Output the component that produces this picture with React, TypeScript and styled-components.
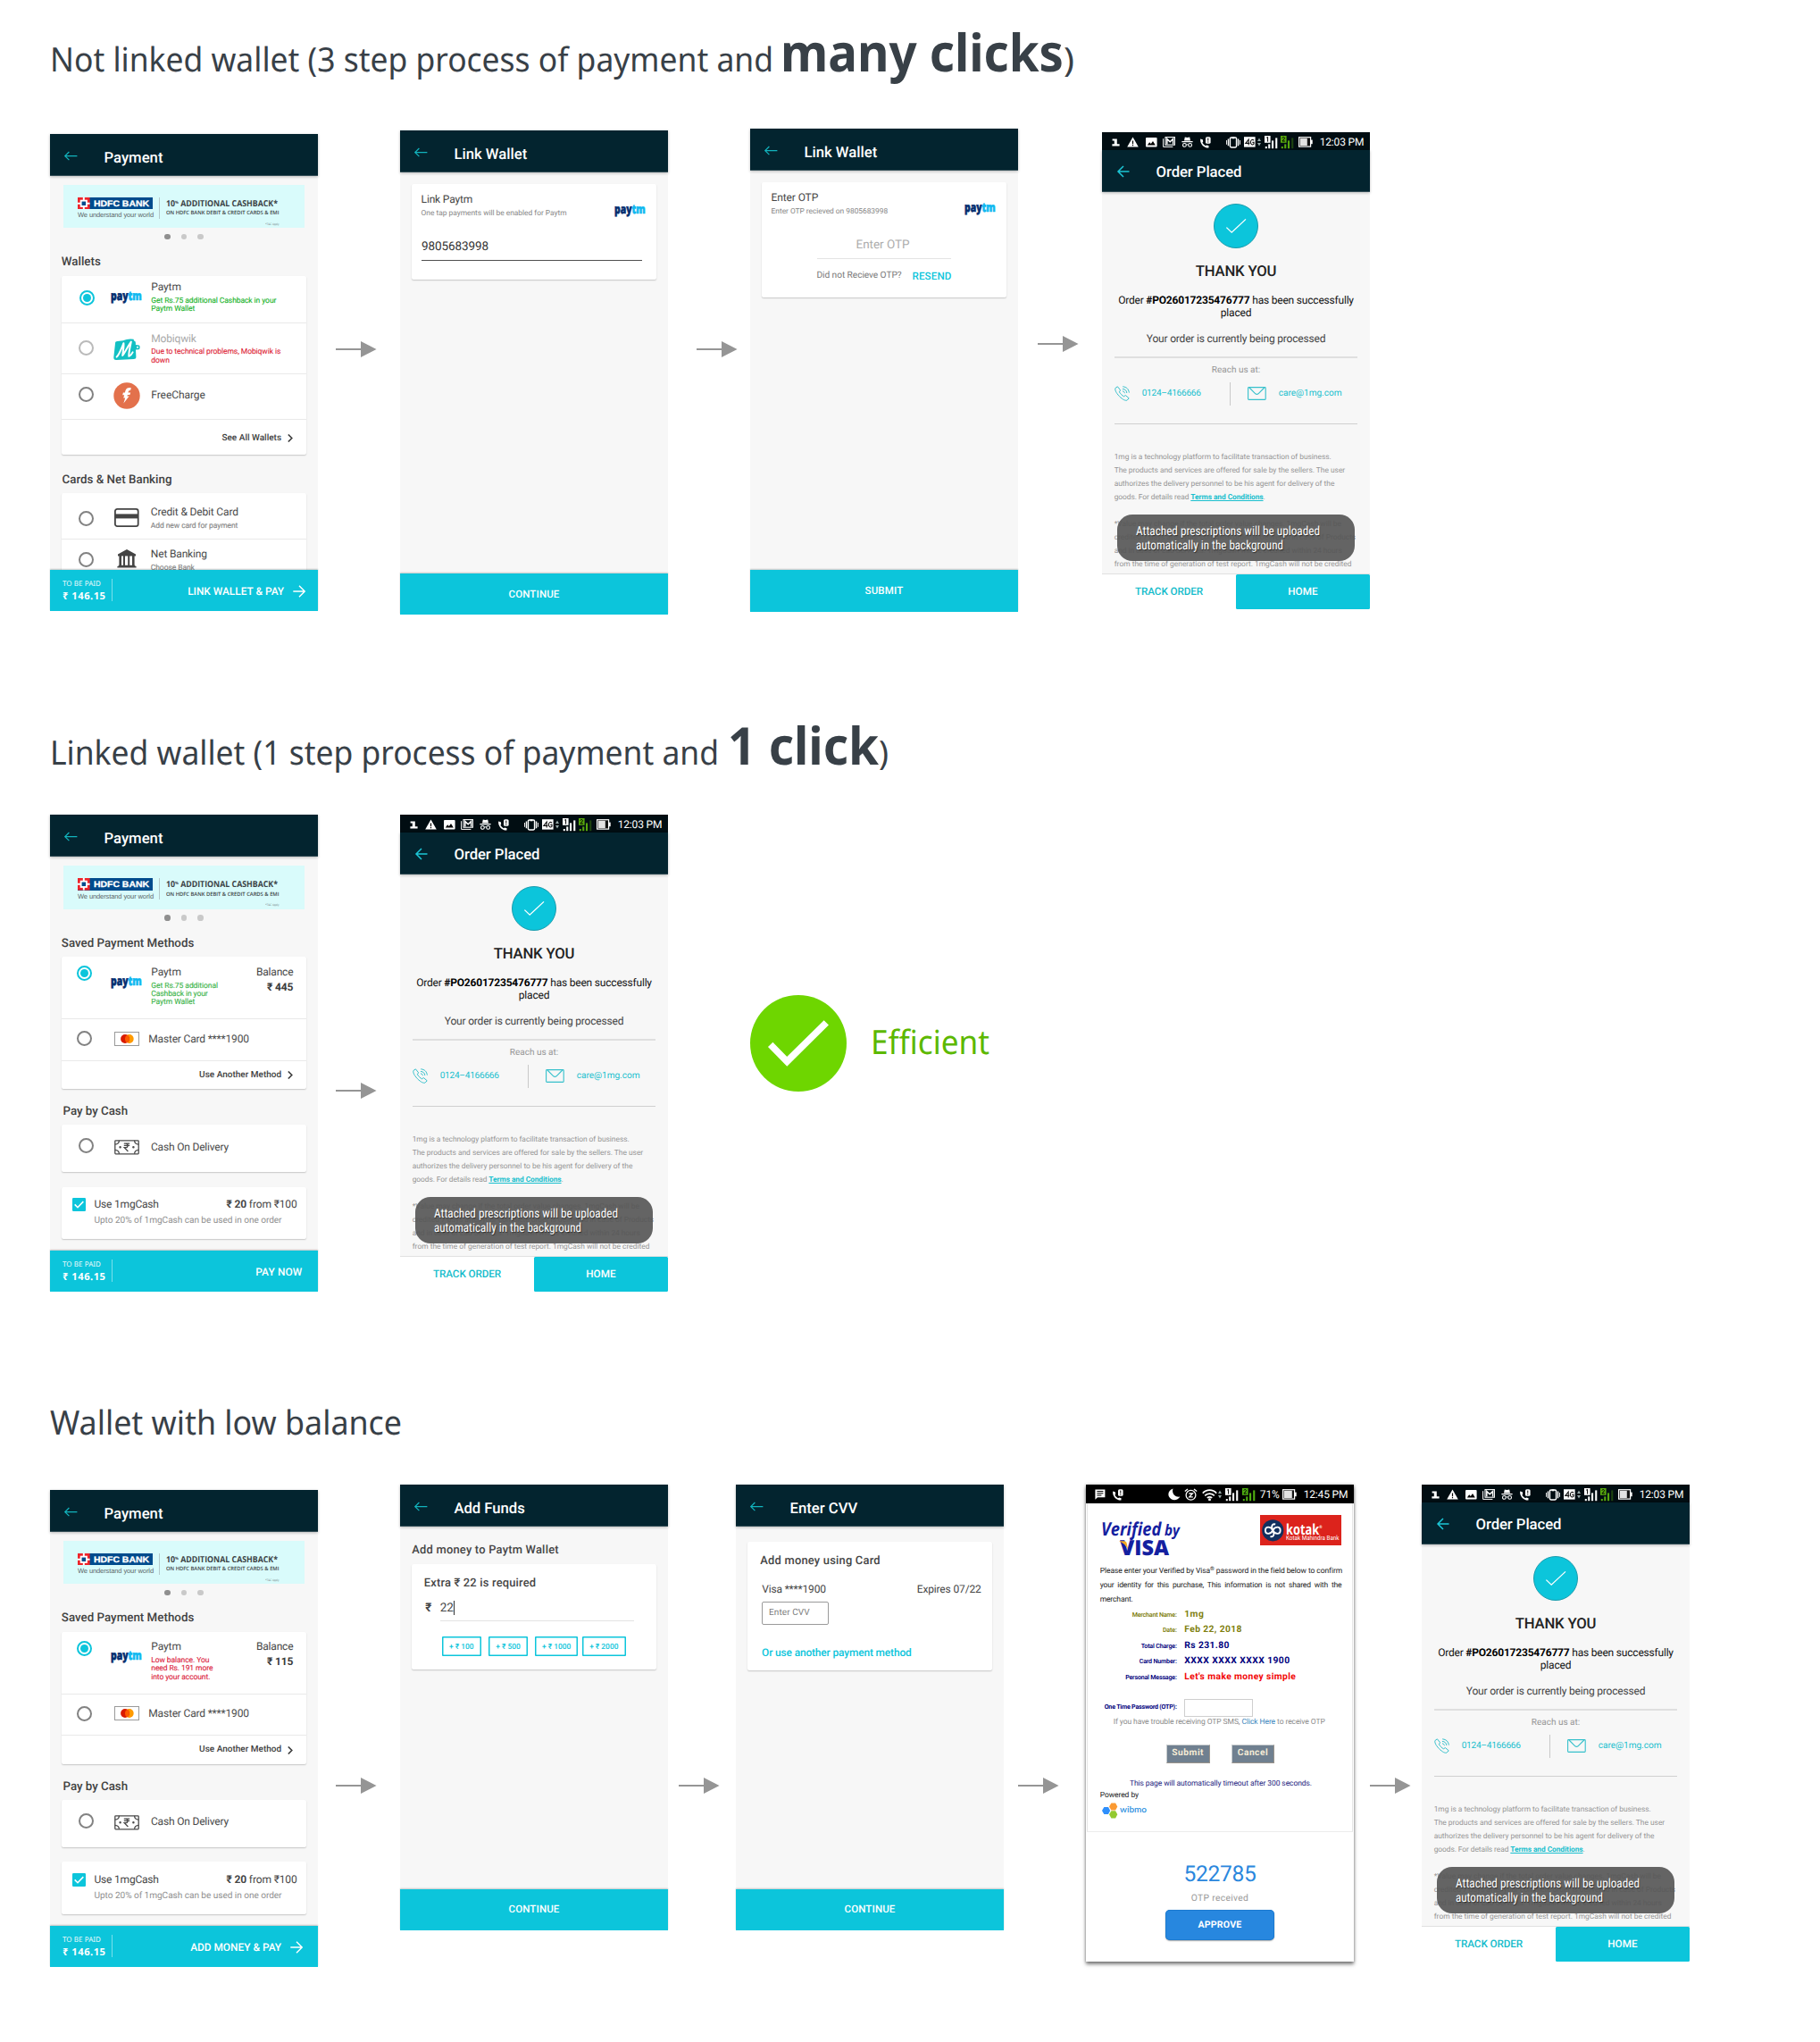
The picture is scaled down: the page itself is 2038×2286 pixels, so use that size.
import React, { useLayoutEffect, useRef, useState } from "react";
import styled, { createGlobalStyle, css } from "styled-components";

const CYAN = "#0cc5db";
const INK = "#464646";
const MUTED = "#868686";

const GlobalStyle = createGlobalStyle`
  * { box-sizing: border-box; }
  html, body { margin: 0; padding: 0; background: #fff; }
  body {
    font-family: Roboto, "Noto Sans", sans-serif;
    color: ${INK};
    text-rendering: geometricPrecision;
  }
  svg { display: block; flex: none; }
`;

/* ---------- text that tracks or squeezes itself to a set measure ---------- */

const Measure = styled.span<{ $w: number }>`
  display: inline-block;
  width: ${(p) => p.$w}px;
  white-space: pre;
  text-align: left;
`;
const Glyphs = styled.span`
  display: inline-block;
  white-space: pre;
  transform-origin: 0 50%;
`;

function Fit({ w, squeeze, children }: { w: number; squeeze?: boolean; children: React.ReactNode }) {
  const ref = useRef<HTMLSpanElement>(null);
  const [style, setStyle] = useState<React.CSSProperties>({});
  useLayoutEffect(() => {
    const el = ref.current;
    if (!el) return;
    const natural = el.getBoundingClientRect().width;
    const count = (el.textContent || "").length || 1;
    setStyle(
      squeeze
        ? { transform: `scaleX(${w / natural})` }
        : { letterSpacing: `${(w - natural) / count}px` }
    );
  }, []);
  return (
    <Measure $w={w}>
      <Glyphs ref={ref} style={style}>{children}</Glyphs>
    </Measure>
  );
}

/* ---------- page ---------- */

const Page = styled.main`
  width: 2038px;
  height: 2286px;
  padding-left: 56px;
  background: #fff;
  overflow: hidden;
`;
const Section = styled.section<{ $h: number }>`
  height: ${(p) => p.$h}px;
  padding-top: 26px;
`;
const Heading = styled.h2`
  margin: 0;
  height: 80px;
  font: 400 37.4px/80px "Noto Sans", "Open Sans", sans-serif;
  color: #384047;
  white-space: nowrap;
`;
const Loud = styled.strong<{ $ml: number }>`
  display: inline-block;
  margin-left: ${(p) => p.$ml}px;
  font-size: 58px;
  line-height: 60px;
  font-weight: 700;
`;
const Flow = styled.div<{ $mt: number }>`
  display: flex;
  align-items: flex-start;
  margin-top: ${(p) => p.$mt}px;
`;
const Connector = styled.div<{ $w: number; $inset: number; $y: number }>`
  flex: none;
  width: ${(p) => p.$w}px;
  padding-left: ${(p) => p.$inset}px;
  margin-top: ${(p) => p.$y - 9}px;
`;
const Arrow = ({ w, inset, y }: { w: number; inset: number; y: number }) => (
  <Connector $w={w} $inset={inset} $y={y}>
    <svg width="46" height="18" viewBox="0 0 46 18">
      <path d="M0 9H30" stroke="#959595" strokeWidth="2" />
      <path d="M28 0L45.5 9L28 18Z" fill="#959595" />
    </svg>
  </Connector>
);

/* ---------- phone frame ---------- */

const Phone = styled.article<{ $h: number; $mt?: number; $raised?: boolean }>`
  position: relative;
  flex: none;
  display: flex;
  flex-direction: column;
  width: 300px;
  height: ${(p) => p.$h}px;
  margin-top: ${(p) => p.$mt || 0}px;
  background: ${(p) => (p.$raised ? "#fff" : "#f7f7f7")};
  ${(p) => p.$raised && css`box-shadow: 0 3px 4px rgba(0, 0, 0, 0.5), 0 0 3px rgba(0, 0, 0, 0.25);`}
`;
const AppBar = styled.header<{ $lift: number }>`
  flex: none;
  display: flex;
  height: 47px;
  padding: ${(p) => 17.6 - p.$lift}px 0 0 15.7px;
  background: #03242f;
  border-bottom: 1px solid #2f4a53;
  box-shadow: 0 1px 3px rgba(0, 0, 0, 0.25);
  color: #fff;
  font-weight: 500;
  font-size: 16.7px;
  line-height: 20px;
  z-index: 1;
`;
const AppBarIcon = styled.span`
  width: 44.8px;
  padding-top: 1.2px;
`;
function TopBar({ title, w, lift = 0, bold }: { title: string; w: number; lift?: number; bold?: boolean }) {
  return (
    <AppBar $lift={lift}>
      <AppBarIcon>
        {bold ? (
          <svg width="15" height="14" viewBox="0 0 15 14" fill="none" stroke="#1cc6d6" strokeWidth="1.5">
            <path d="M14.5 7H2.2M8 1L2 7L8 13" />
          </svg>
        ) : (
          <svg width="15" height="12" viewBox="0 0 15 12" fill="none" stroke="#12b3bd" strokeWidth="1.2">
            <path d="M14.4 5.6H0.9M5.4 1L0.8 5.6L5.4 10.2" />
          </svg>
        )}
      </AppBarIcon>
      <Fit w={w}>{title}</Fit>
    </AppBar>
  );
}
const Body = styled.div`
  flex: 1;
  min-height: 0;
  overflow: hidden;
  padding: 10px 13.3px 0;
`;
const Card = styled.div<{ $mt?: number; $h?: number }>`
  margin-top: ${(p) => p.$mt || 0}px;
  ${(p) => p.$h && css`height: ${p.$h}px;`}
  background: #fff;
  border-radius: 2px;
  box-shadow: 0 1px 1.5px rgba(0, 0, 0, 0.2);
`;

/* ---------- payment screen ---------- */

const Banner = styled.div`
  display: flex;
  align-items: flex-start;
  height: 48.3px;
  margin: 0 1.7px;
  padding: 13.6px 0 0 16px;
  background: #d9fbfb;
`;
const BankBrand = styled.div`
  width: 91.3px;
`;
const BankPlate = styled.div`
  display: flex;
  width: 84.3px;
  height: 13.6px;
  background: #004b8d;
  color: #fff;
  font: 700 9.4px/13.6px "Liberation Sans", Arial, sans-serif;
`;
const BankName = styled.span`
  margin-left: 4.4px;
  -webkit-text-stroke: 0.3px #fff;
`;
const BankMotto = styled.div`
  margin-top: 2px;
  font: 400 7.5px/9px "Liberation Sans", Arial, sans-serif;
  color: #5b6668;
`;
const Offer = styled.div`
  height: 24px;
  padding-left: 6.5px;
  border-left: 1px solid #b5c9cb;
  color: #3b4245;
  font-family: "Open Sans", "Noto Sans", sans-serif;
`;
const OfferTitle = styled.div`
  font-size: 9.6px;
  line-height: 14px;
  font-weight: 700;
  sup { font-size: 4.6px; line-height: 0; vertical-align: 2.8px; }
`;
const OfferText = styled.div`
  margin-top: 0.8px;
  font-size: 5.9px;
  line-height: 7px;
  font-weight: 600;
`;
const OfferTerms = styled.div`
  margin-top: 6.5px;
  text-align: right;
  font-size: 3.2px;
  line-height: 4px;
  color: #6f7d7f;
`;
const Dots = styled.div`
  display: flex;
  justify-content: center;
  align-items: center;
  gap: 11.6px;
  height: 19.7px;
`;
const Dot = styled.i<{ $on?: boolean }>`
  width: 6.7px;
  height: 6.7px;
  border-radius: 50%;
  background: ${(p) => (p.$on ? "#8f8f8f" : "#c9c9c9")};
`;
const SectionTitle = styled.h3<{ $above: number; $below: number; $inset?: number }>`
  margin: ${(p) => p.$above + 1.5}px 0 ${(p) => p.$below - 1.5}px ${(p) => p.$inset || 0}px;
  height: 16px;
  font-size: 13.3px;
  line-height: 16px;
  font-weight: 500;
  color: #424242;
`;
const MethodRow = styled.div<{ $h: number }>`
  display: grid;
  grid-template-columns: 55px 34.5px 1fr auto;
  align-items: start;
  height: ${(p) => p.$h}px;
  & + & { border-top: 1.3px solid #e9e9e9; }
`;
const RadioCell = styled.div<{ $x: number; $top: number }>`
  padding: ${(p) => p.$top}px 0 0 ${(p) => p.$x}px;
`;
const IconCell = styled.div<{ $top: number }>`
  display: flex;
  justify-content: center;
  padding-top: ${(p) => p.$top}px;
`;
const TextCell = styled.div<{ $top: number; $left?: number }>`
  padding: ${(p) => p.$top}px 0 0 ${(p) => p.$left ?? 10.5}px;
`;
const MethodName = styled.div<{ $off?: boolean }>`
  height: 14px;
  font-size: 12px;
  line-height: 14px;
  color: ${(p) => (p.$off ? "#a9a9a9" : "#4a4a4a")};
`;
const MethodNote = styled.div<{ $tone?: string }>`
  margin-top: 4.8px;
  font-size: 8.5px;
  line-height: 9.2px;
  color: ${(p) => p.$tone || MUTED};
  -webkit-text-stroke: 0.12px currentColor;
  & > span { display: block; }
`;
const BalanceCell = styled.div<{ $top: number }>`
  padding: ${(p) => p.$top}px 14.3px 0 0;
  text-align: right;
  font-size: 12px;
  line-height: 14px;
  strong { display: block; margin-top: 2.8px; font-weight: 700; color: #3c3c3c; }
`;
const MoreRow = styled.div<{ $h: number; $top: number }>`
  display: flex;
  justify-content: flex-end;
  height: ${(p) => p.$h}px;
  padding: ${(p) => p.$top + 0.9}px 14.6px 0 0;
  border-top: 1.3px solid #e9e9e9;
  font-size: 10px;
  line-height: 12px;
  font-weight: 500;
  color: #3d3d3d;
  svg { margin: 1.2px 0 0 7px; }
`;
const RadioRing = styled.i<{ $on?: boolean; $off?: boolean }>`
  display: flex;
  align-items: center;
  justify-content: center;
  width: 17px;
  height: 17px;
  border-radius: 50%;
  border: 2px solid ${(p) => (p.$on ? CYAN : p.$off ? "#bababa" : "#828282")};
  &::after {
    content: "";
    width: 9px;
    height: 9px;
    border-radius: 50%;
    background: ${(p) => (p.$on ? CYAN : "transparent")};
  }
`;
const PaytmWord = styled.span`
  display: block;
  height: 10.5px;
  font: 800 13.8px/7.6px "Open Sans", "DejaVu Sans", sans-serif;
  color: #042e6f;
  -webkit-text-stroke: 0.6px currentColor;
  b { font-weight: 800; color: #0fb8f0; }
`;
const PaytmLogo = () => (
  <PaytmWord>
    <Fit w={34.7} squeeze>pay<b>tm</b></Fit>
  </PaytmWord>
);
const MobiqwikIcon = () => (
  <svg width="30" height="24" viewBox="0 0 30 24">
    <path d="M2 5.5C2 3.6 3 3.2 4.5 3L11 2.2C14 1.4 16 0.6 19 0.5L22.6 0.8L23 2.4C24.4 2.8 24.8 3.4 24.9 5V7L28.6 7.4C30 7.8 30 11.8 28.4 12.2L25 12.6L25.4 20.5C25.4 22.4 24.4 22.9 22.8 22.9L3.4 23.9C1 24 0.2 23 0.3 21Z" fill="#12c0c3" />
    <path d="M3.6 20.6C6.8 17.5 9.2 10.5 11.4 5.2C12 8.8 10.6 14.8 10.2 19C13.4 15 16.2 8.4 19.8 3.6C18.8 9.4 17 14.6 17.4 19.8C19 19.2 20.6 17.4 21.6 15.4" fill="none" stroke="#fff" strokeWidth="2" strokeLinejoin="round" strokeLinecap="round" />
    <circle cx="27" cy="9.8" r="1" fill="#fff" />
  </svg>
);
const FreeChargeIcon = () => (
  <svg width="30" height="30" viewBox="0 0 30 30">
    <circle cx="15" cy="15" r="14.7" fill="#e3714c" />
    <path d="M19.8 6.2C16.2 5.8 14.2 6.8 13.4 9.6L12.9 11.6H10.9L10.2 14.2H12.2L11.2 17.6H13.2L11.4 23.4L17.6 15.6H15.2L16 13.9H18.4L19.2 11.4H16.5C16.9 9.4 17.6 8.8 19.1 9Z" fill="#fff" />
  </svg>
);
const CreditCardIcon = () => (
  <svg width="28" height="21" viewBox="0 0 28 21">
    <rect x="0.9" y="0.9" width="25.8" height="19.2" rx="2.4" fill="none" stroke="#444" strokeWidth="1.8" />
    <rect x="1" y="6.4" width="25.6" height="5" fill="#444" />
  </svg>
);
const BankIcon = () => (
  <svg width="22" height="21" viewBox="0 0 22 21" fill="#444">
    <path d="M11 0L21 5.6V7.4H1V5.6Z" />
    <path d="M2.4 7H5V18H2.4ZM7 7H9V18H7ZM12.2 7H14.2V18H12.2ZM17 7H19.6V18H17Z" />
    <path d="M1.6 17.8H20.4V19H21.6V20.5H0.4V19H1.6Z" />
  </svg>
);
const MasterCardIcon = () => (
  <svg width="28" height="16" viewBox="0 0 28 16">
    <rect x="0.5" y="0.5" width="27" height="15" fill="#fff" stroke="#9a9a9a" />
    <circle cx="16.8" cy="8" r="4.9" fill="#ff9a00" />
    <circle cx="12" cy="8" r="4.9" fill="#d91a00" />
    <path d="M14.4 3.7A4.9 4.9 0 0 1 14.4 12.3A4.9 4.9 0 0 1 14.4 3.7Z" fill="#fd5a00" />
  </svg>
);
const CashIcon = () => (
  <svg width="28" height="17" viewBox="0 0 28 17" fill="none" stroke="#4b4b4b" strokeWidth="1.3">
    <rect x="0.8" y="0.8" width="26.4" height="15" rx="0.8" />
    <path d="M5.4 0.8C5.4 3.4 3.6 5 0.8 5.2M22.6 0.8C22.6 3.4 24.4 5 27.2 5.2M5.4 15.8C5.4 13.2 3.6 11.6 0.8 11.4M22.6 15.8C22.6 13.2 24.4 11.6 27.2 11.4" />
    <path d="M10.8 4.2H17.2M10.8 6.4H17.2M11 4.2H12.6C15.8 4.2 15.8 8.6 12.6 8.6H11.2L15.4 13" />
    <circle cx="6.6" cy="8.3" r="0.6" fill="#4b4b4b" />
    <circle cx="21.4" cy="8.3" r="0.6" fill="#4b4b4b" />
  </svg>
);
const Chevron = () => (
  <svg width="6" height="9" viewBox="0 0 6 9" fill="none" stroke="#3d3d3d" strokeWidth="1.6">
    <path d="M0.8 0.5L4.8 4.5L0.8 8.5" />
  </svg>
);
const HdfcMark = () => (
  <svg width="13.6" height="13.6" viewBox="0 0 14 14">
    <rect width="14" height="14" fill="#ed232a" />
    <path d="M6 0H8V14H6ZM0 6H14V8H0Z" fill="#fff" />
    <rect x="2.8" y="2.8" width="8.4" height="8.4" fill="#fff" />
    <rect x="4.7" y="4.7" width="4.6" height="4.6" fill="#004b8d" />
  </svg>
);

const PayFooter = styled.footer`
  flex: none;
  display: flex;
  align-items: flex-start;
  height: 46px;
  padding: 10px 13.7px 0 14px;
  background: ${CYAN};
  box-shadow: 0 -1px 1.5px rgba(0, 0, 0, 0.22);
  color: #fff;
  z-index: 1;
`;
const Due = styled.div`
  width: 55.5px;
  height: 25px;
  border-right: 1px solid rgba(255, 255, 255, 0.45);
  font-family: "Noto Sans", "Open Sans", sans-serif;
`;
const DueLabel = styled.div`
  font-size: 8px;
  line-height: 11px;
  opacity: 0.92;
`;
const DueAmount = styled.div`
  margin-top: 2px;
  font-size: 11.2px;
  line-height: 14px;
  font-weight: 700;
`;
const PayAction = styled.div<{ $pr: number }>`
  display: flex;
  justify-content: flex-end;
  flex: 1;
  padding: 6.6px ${(p) => p.$pr}px 0 0;
  font-size: 11.9px;
  line-height: 14px;
  font-weight: 500;
  svg { margin-left: 10.2px; }
`;
const ForwardIcon = () => (
  <svg width="14" height="14" viewBox="0 0 14 14" fill="none" stroke="#fff" strokeWidth="1.4">
    <path d="M0.3 7H13M7 0.8L13.2 7L7 13.2" />
  </svg>
);

function BannerBlock() {
  return (
    <>
      <Banner>
        <BankBrand>
          <BankPlate>
            <HdfcMark />
            <BankName><Fit w={62} squeeze>HDFC BANK</Fit></BankName>
          </BankPlate>
          <BankMotto><Fit w={85}>We understand your world</Fit></BankMotto>
        </BankBrand>
        <Offer>
          <OfferTitle><Fit w={125} squeeze>10<sup>%</sup> ADDITIONAL CASHBACK*</Fit></OfferTitle>
          <OfferText><Fit w={126.5} squeeze>ON HDFC BANK DEBIT &amp; CREDIT CARDS &amp; EMI</Fit></OfferText>
          <OfferTerms><Fit w={15.5} squeeze>*T&amp;C Apply</Fit></OfferTerms>
        </Offer>
      </Banner>
      <Dots><Dot $on /><Dot /><Dot /></Dots>
    </>
  );
}

function Footer({ label, w, pr = 0, arrow }: { label: string; w: number; pr?: number; arrow?: boolean }) {
  return (
    <PayFooter>
      <Due>
        <DueLabel><Fit w={43}>TO BE PAID</Fit></DueLabel>
        <DueAmount><Fit w={48.5}>₹ 146.15</Fit></DueAmount>
      </Due>
      <PayAction $pr={pr}>
        <Fit w={w}>{label}</Fit>
        {arrow && <ForwardIcon />}
      </PayAction>
    </PayFooter>
  );
}

function WalletsScreen() {
  return (
    <Phone $h={534} $mt={6}>
      <TopBar title="Payment" w={66} />
      <Body>
        <BannerBlock />
        <SectionTitle $above={10} $below={8} $inset={-0.5}><Fit w={44}>Wallets</Fit></SectionTitle>
        <Card>
          <MethodRow $h={51.7}>
            <RadioCell $x={20.2} $top={15.8}><RadioRing $on /></RadioCell>
            <IconCell $top={19.5}><PaytmLogo /></IconCell>
            <TextCell $top={5.5}>
              <MethodName><Fit w={33.5}>Paytm</Fit></MethodName>
              <MethodNote $tone="#20b42c">
                <Fit w={140}>Get Rs.75 additional Cashback in your</Fit>
                <Fit w={49}>Paytm Wallet</Fit>
              </MethodNote>
            </TextCell>
          </MethodRow>
          <MethodRow $h={57.7}>
            <RadioCell $x={18.5} $top={19.8}><RadioRing $off /></RadioCell>
            <IconCell $top={17}><MobiqwikIcon /></IconCell>
            <TextCell $top={10}>
              <MethodName $off><Fit w={50.5}>Mobiqwik</Fit></MethodName>
              <MethodNote $tone="#de1f38">
                <Fit w={145}>Due to technical problems, Mobiqwik is</Fit>
                <Fit w={20.5}>down</Fit>
              </MethodNote>
            </TextCell>
          </MethodRow>
          <MethodRow $h={51}>
            <RadioCell $x={18.5} $top={13.8}><RadioRing /></RadioCell>
            <IconCell $top={8.3}><FreeChargeIcon /></IconCell>
            <TextCell $top={15.2}><MethodName><Fit w={60.5}>FreeCharge</Fit></MethodName></TextCell>
          </MethodRow>
          <MoreRow $h={39.2} $top={13.8}><Fit w={66.7}>See All Wallets</Fit><Chevron /></MoreRow>
        </Card>
        <SectionTitle $above={19.6} $below={7.6} $inset={0.2}><Fit w={123}>Cards &amp; Net Banking</Fit></SectionTitle>
        <Card>
          <MethodRow $h={51.5}>
            <RadioCell $x={18.5} $top={19.8}><RadioRing /></RadioCell>
            <IconCell $top={17.4}><CreditCardIcon /></IconCell>
            <TextCell $top={14.3} $left={10}>
              <MethodName><Fit w={98}>Credit &amp; Debit Card</Fit></MethodName>
              <MethodNote><Fit w={97.5}>Add new card for payment</Fit></MethodNote>
            </TextCell>
          </MethodRow>
          <MethodRow $h={60}>
            <RadioCell $x={18.5} $top={14.2}><RadioRing /></RadioCell>
            <IconCell $top={11.2}><BankIcon /></IconCell>
            <TextCell $top={8.5} $left={10}>
              <MethodName><Fit w={63}>Net Banking</Fit></MethodName>
              <MethodNote><Fit w={49}>Choose Bank</Fit></MethodNote>
            </TextCell>
          </MethodRow>
        </Card>
      </Body>
      <Footer label="LINK WALLET & PAY" w={108} arrow />
    </Phone>
  );
}

const CashRow = styled.div`
  display: flex;
  height: 58.4px;
  padding: 12.4px 10.2px 0 11.7px;
`;
const Tick = styled.span`
  display: flex;
  align-items: center;
  justify-content: center;
  width: 15px;
  height: 15px;
  border-radius: 1.3px;
  background: ${CYAN};
`;
const CashText = styled.div`
  flex: 1;
  padding-left: 9.5px;
`;
const CashLine = styled.div`
  display: flex;
  justify-content: space-between;
  height: 14px;
  font-size: 12px;
  line-height: 14px;
  strong { font-weight: 700; }
`;
const CashHint = styled.div`
  margin-top: 6.3px;
  font-size: 10.1px;
  line-height: 12px;
  color: #8f8f8f;
`;

type SavedProps = {
  mt: number;
  tone: string;
  note: [string, number][];
  balance: string;
  children: React.ReactNode;
};
function SavedScreen({ mt, tone, note, balance, children }: SavedProps) {
  return (
    <Phone $h={534} $mt={mt}>
      <TopBar title="Payment" w={66} />
      <Body>
        <BannerBlock />
        <SectionTitle $above={10} $below={7.9} $inset={-0.5}><Fit w={148.5}>Saved Payment Methods</Fit></SectionTitle>
        <Card>
          <MethodRow $h={68.7}>
            <RadioCell $x={16.5} $top={10}><RadioRing $on /></RadioCell>
            <IconCell $top={23.5}><PaytmLogo /></IconCell>
            <TextCell $top={9.5}>
              <MethodName><Fit w={33.5}>Paytm</Fit></MethodName>
              <MethodNote $tone={tone}>
                {note.map(([line, w]) => <Fit key={line} w={w}>{line}</Fit>)}
              </MethodNote>
            </TextCell>
            <BalanceCell $top={9.5}>
              <Fit w={41.5}>Balance</Fit>
              <strong><Fit w={29.5}>{balance}</Fit></strong>
            </BalanceCell>
          </MethodRow>
          <MethodRow $h={46.7}>
            <RadioCell $x={16.5} $top={13}><RadioRing /></RadioCell>
            <IconCell $top={13.8}><MasterCardIcon /></IconCell>
            <TextCell $top={14.9} $left={7.5}><MethodName><Fit w={112.5}>Master Card ****1900</Fit></MethodName></TextCell>
          </MethodRow>
          <MoreRow $h={32.3} $top={9.2}><Fit w={92}>Use Another Method</Fit><Chevron /></MoreRow>
        </Card>
        <SectionTitle $above={17} $below={7} $inset={1.3}><Fit w={72.5}>Pay by Cash</Fit></SectionTitle>
        <Card>
          <MethodRow $h={53.2}>
            <RadioCell $x={18.5} $top={15.3}><RadioRing /></RadioCell>
            <IconCell $top={17.2}><CashIcon /></IconCell>
            <TextCell $top={17.9} $left={10.2}><MethodName><Fit w={87}>Cash On Delivery</Fit></MethodName></TextCell>
          </MethodRow>
        </Card>
        <Card $mt={16.4}>
          <CashRow>
            <Tick>
              <svg width="11" height="9" viewBox="0 0 11 9" fill="none" stroke="#fff" strokeWidth="1.6"><path d="M0.7 4.4L4 7.7L10.3 1.1" /></svg>
            </Tick>
            <CashText>
              <CashLine><Fit w={72.3}>Use 1mgCash</Fit><Fit w={79}><strong>₹ 20</strong> from ₹100</Fit></CashLine>
              <CashHint><Fit w={210}>Upto 20% of 1mgCash can be used in one order</Fit></CashHint>
            </CashText>
          </CashRow>
        </Card>
      </Body>
      {children}
    </Phone>
  );
}

/* ---------- form screens ---------- */

const FormBody = styled.div<{ $pt: number }>`
  flex: 1;
  padding: ${(p) => p.$pt}px 13.3px 0;
`;
const BigAction = styled.footer<{ $h: number }>`
  flex: none;
  display: flex;
  align-items: center;
  justify-content: center;
  height: ${(p) => p.$h}px;
  padding-bottom: 1px;
  background: ${CYAN};
  box-shadow: 0 -1px 1.5px rgba(0, 0, 0, 0.2);
  color: #fff;
  font-size: 11.5px;
  line-height: 14px;
  font-weight: 500;
`;
const WalletHead = styled.div`
  display: flex;
  justify-content: space-between;
  padding: 10.4px 12.3px 0 10.3px;
`;
const WalletTitle = styled.div`
  height: 14px;
  font-size: 12px;
  line-height: 14px;
`;
const WalletHint = styled.div`
  margin-top: 3.6px;
  height: 9px;
  font-size: 8.4px;
  line-height: 10px;
  color: ${MUTED};
`;
const LogoSlot = styled.div`
  padding-top: 14.5px;
`;
const NumberField = styled.div`
  margin: 24.8px 15.5px 0 10.7px;
  height: 24.5px;
  border-bottom: 1.4px solid #4f4f4f;
  font-size: 13.5px;
  line-height: 16.6px;
  color: #333;
`;
const OtpField = styled.div`
  width: 150.5px;
  height: 24.5px;
  margin: 24.8px auto 0;
  padding-right: 3px;
  border-bottom: 1.5px solid #e3e3e3;
  text-align: center;
  font-size: 13.5px;
  line-height: 16.6px;
  color: #adadad;
`;
const ResendRow = styled.div`
  display: flex;
  justify-content: space-between;
  width: 151px;
  margin: 11.8px auto 0;
  line-height: 14px;
  font-size: 10.2px;
  color: #787878;
  strong { font-size: 11.6px; font-weight: 500; color: ${CYAN}; }
`;

function LinkWalletScreen() {
  return (
    <Phone $h={542} $mt={2}>
      <TopBar title="Link Wallet" w={81.7} />
      <FormBody $pt={13}>
        <Card $h={106.7}>
          <WalletHead>
            <div>
              <WalletTitle><Fit w={57.5}>Link Paytm</Fit></WalletTitle>
              <WalletHint><Fit w={163}>One tap payments will be enabled for Paytm</Fit></WalletHint>
            </div>
            <LogoSlot><PaytmLogo /></LogoSlot>
          </WalletHead>
          <NumberField><Fit w={75}>9805683998</Fit></NumberField>
        </Card>
      </FormBody>
      <BigAction $h={46}><Fit w={57}>CONTINUE</Fit></BigAction>
    </Phone>
  );
}
function OtpScreen() {
  return (
    <Phone $h={541}>
      <TopBar title="Link Wallet" w={81.7} />
      <FormBody $pt={13}>
        <Card $h={129}>
          <WalletHead>
            <div>
              <WalletTitle><Fit w={52.5}>Enter OTP</Fit></WalletTitle>
              <WalletHint><Fit w={130.5}>Enter OTP recieved on 9805683998</Fit></WalletHint>
            </div>
            <LogoSlot><PaytmLogo /></LogoSlot>
          </WalletHead>
          <OtpField><Fit w={60}>Enter OTP</Fit></OtpField>
          <ResendRow><Fit w={95}>Did not Recieve OTP?</Fit><strong><Fit w={44}>RESEND</Fit></strong></ResendRow>
        </Card>
      </FormBody>
      <BigAction $h={46.7}><Fit w={43}>SUBMIT</Fit></BigAction>
    </Phone>
  );
}

const FundsTitle = styled.div`
  height: 14px;
  font-size: 12.9px;
  line-height: 15.8px;
  font-weight: 500;
`;
const FundsCard = styled(Card)`
  height: 117.7px;
  margin-top: 9.3px;
  padding: 13.8px 25px 0 13.5px;
`;
const AmountRow = styled.div`
  display: flex;
  margin-top: 13.2px;
  padding-left: 1.4px;
  line-height: 16.6px;
  font-size: 13.5px;
  b { width: 16.5px; font-weight: 700; }
`;
const AmountField = styled.div`
  flex: 1;
  height: 22.6px;
  border-bottom: 1.3px solid #e3e3e3;
`;
const Caret = styled.i`
  display: inline-block;
  width: 1px;
  height: 16px;
  background: #333;
  vertical-align: top;
`;
const ChipRow = styled.div`
  display: flex;
  margin: 17.4px -12px 0 20px;
`;
const Chip = styled.div<{ $w: number; $gap: number }>`
  display: flex;
  flex: none;
  align-items: center;
  justify-content: center;
  width: ${(p) => p.$w}px;
  height: 21.6px;
  padding-top: 0.6px;
  margin-right: ${(p) => p.$gap}px;
  box-shadow: inset 0 0 0 1.5px ${CYAN};
  border-radius: 1px;
  color: ${CYAN};
  font-size: 8.4px;
  line-height: 10px;
  font-weight: 500;
`;
function AddFundsScreen() {
  return (
    <Phone $h={499}>
      <TopBar title="Add Funds" w={79.2} />
      <FormBody $pt={19.2}>
        <FundsTitle><Fit w={164.5}>Add money to Paytm Wallet</Fit></FundsTitle>
        <FundsCard>
          <FundsTitle><Fit w={125.5}>Extra ₹ 22 is required</Fit></FundsTitle>
          <AmountRow>
            <b>₹</b>
            <AmountField><Fit w={15}>22</Fit><Caret /></AmountField>
          </AmountRow>
          <ChipRow>
            <Chip $w={44} $gap={8.3}><Fit w={27.5}>+ ₹ 100</Fit></Chip>
            <Chip $w={44} $gap={8.3}><Fit w={27.5}>+ ₹ 500</Fit></Chip>
            <Chip $w={47.5} $gap={4.9}><Fit w={32.3}>+ ₹ 1000</Fit></Chip>
            <Chip $w={49} $gap={0}><Fit w={32.3}>+ ₹ 2000</Fit></Chip>
          </ChipRow>
        </FundsCard>
      </FormBody>
      <BigAction $h={46.5}><Fit w={57}>CONTINUE</Fit></BigAction>
    </Phone>
  );
}

const CvvCard = styled(Card)`
  height: 144px;
  padding: 14px 12px 0 14px;
`;
const CvvLine = styled.div`
  display: flex;
  justify-content: space-between;
  height: 14px;
  margin-top: 17.6px;
  padding-left: 2px;
  font-size: 12px;
  line-height: 14px;
`;
const CvvInput = styled.div`
  width: 75px;
  height: 25.4px;
  margin: 7.6px 0 0 2px;
  padding-left: 6.8px;
  border: 1.2px solid #9a9a9a;
  border-radius: 2px;
  font-size: 10px;
  line-height: 24px;
  color: #7d7d7d;
`;
const OtherMethod = styled.div`
  margin: 24px 0 0 1.8px;
  font-size: 11.9px;
  line-height: 14px;
  font-weight: 500;
  color: ${CYAN};
`;
function CvvScreen() {
  return (
    <Phone $h={499}>
      <TopBar title="Enter CVV" w={75.7} />
      <FormBody $pt={17}>
        <CvvCard>
          <FundsTitle><Fit w={134.5}>Add money using Card</Fit></FundsTitle>
          <CvvLine><Fit w={71.5}>Visa ****1900</Fit><Fit w={72}>Expires 07/22</Fit></CvvLine>
          <CvvInput><Fit w={45.5}>Enter CVV</Fit></CvvInput>
          <OtherMethod><Fit w={167.5}>Or use another payment method</Fit></OtherMethod>
        </CvvCard>
      </FormBody>
      <BigAction $h={46.5}><Fit w={57}>CONTINUE</Fit></BigAction>
    </Phone>
  );
}

/* ---------- status bars ---------- */

const StatusBar = styled.div<{ $h: number; $bg: string }>`
  flex: none;
  display: flex;
  align-items: center;
  height: ${(p) => p.$h}px;
  padding: 2px 6.8px 0 0;
  background: ${(p) => p.$bg};
  color: #fff;
  font-size: 12px;
  line-height: 14px;
  z-index: 1;
`;
const StatusIcon = styled.span<{ $ml: number }>`
  margin-left: ${(p) => p.$ml}px;
`;
const Clock = styled.span`
  margin-left: auto;
`;
const Percent = styled.span`
  margin-left: 4.6px;
`;
const CallAlert = () => (
  <svg width="12" height="13" viewBox="0 0 12 13" fill="#fff">
    <path d="M0.2 2.6L2.8 3.2L3.2 5.6L2.4 6.8C3.2 8.4 4.6 9.6 6 10.2L7.2 9.4L9.6 10.2L9.4 12.6C4.2 13 -0.6 8 0.2 2.6Z" />
    <rect x="6" y="0.2" width="5.6" height="7.6" rx="1.6" />
    <path d="M8.8 1.6V4.6M8.8 5.4V6.6" stroke="#000" strokeWidth="1" />
  </svg>
);
const Signal = ({ sim, color, lost }: { sim: string; color: string; lost?: boolean }) => (
  <svg width="15" height="15" viewBox="0 0 15 15" fill={color}>
    <rect x="0" y="0" width="6.6" height="7.8" />
    {sim === "1" ? (
      <path d="M2.2 2.2L3.6 1.4V6.6" fill="none" stroke="#000" strokeWidth="1" />
    ) : (
      <path d="M1.8 2.6C2.4 1 4.8 1.2 4.4 3L1.9 6H4.9" fill="none" stroke="#000" strokeWidth="1" />
    )}
    <rect x="0.8" y="12" width="2" height="2.2" />
    <rect x="4.2" y="9.4" width="2.1" height="4.8" />
    <rect x="8" y="5.4" width="2.1" height="8.8" />
    <rect x="12.2" y="2.4" width="2.1" height="11.8" opacity={lost ? 0.35 : 1} />
  </svg>
);
const Battery = ({ level }: { level: number }) => (
  <svg width="16" height="12" viewBox="0 0 16 12">
    <rect x="0.6" y="0.7" width="13" height="10.4" fill="#111" stroke="#fff" strokeWidth="1.2" />
    <rect x="1.8" y="1.8" width={level} height="8.2" fill="#e2e2e2" />
    <rect x="14" y="3.6" width="1.7" height="4.6" fill="#fff" />
  </svg>
);
const DataArrows = () => (
  <svg width="4" height="10" viewBox="0 0 4 10" fill="#9aa"><path d="M2 0.5L4 4H0ZM2 9.5L0 6H4Z" /></svg>
);

function OrderStatus() {
  return (
    <StatusBar $h={20} $bg="#010d12">
      <StatusIcon $ml={11.3}>
        <svg width="9" height="9" viewBox="0 0 9 9" fill="#fff"><path d="M0.6 0.4H5.8V6.2H8.6V8.6H0.4V6.2H2.8V2.6H0.6Z" /></svg>
      </StatusIcon>
      <StatusIcon $ml={8.2}>
        <svg width="13" height="12" viewBox="0 0 13 12"><path d="M6.5 0.4L12.8 11.4H0.2Z" fill="#fff" /><path d="M6.5 4.4V8M6.5 8.8V10.2" stroke="#000" strokeWidth="1.2" /></svg>
      </StatusIcon>
      <StatusIcon $ml={7.6}>
        <svg width="13" height="11" viewBox="0 0 13 11"><rect width="12.6" height="10.4" rx="1" fill="#fff" /><path d="M1.8 8.4L4.2 5.2L5.8 7L8 4L10.8 8.4Z" fill="#000" /></svg>
      </StatusIcon>
      <StatusIcon $ml={6.2}>
        <svg width="14" height="12" viewBox="0 0 14 12" fill="none" stroke="#fff"><rect x="3" y="0.6" width="10.4" height="8.6" strokeWidth="1.1" /><path d="M0.6 2.2V11.4H11.4" strokeWidth="1" /><path d="M4.8 8.6V2.6L8.2 5.8L11.6 2.6V8.6" strokeWidth="1.5" /></svg>
      </StatusIcon>
      <StatusIcon $ml={7}>
        <svg width="13" height="12" viewBox="0 0 13 12" fill="#fff"><path d="M3.8 0.4L6.5 1L9.2 0.4L10 4.4H3ZM0.4 5H12.6V6.2H0.4Z" /><path d="M5.2 9.2C5.8 8.6 7.2 8.6 7.8 9.2" stroke="#fff" strokeWidth="1" fill="none" /><g fill="none" stroke="#fff" strokeWidth="1.1"><circle cx="3.4" cy="9.4" r="1.9" /><circle cx="9.6" cy="9.4" r="1.9" /></g></svg>
      </StatusIcon>
      <StatusIcon $ml={7.4}><CallAlert /></StatusIcon>
      <StatusIcon $ml={17.2}>
        <svg width="16" height="13" viewBox="0 0 16 13" fill="none" stroke="#fff"><rect x="4.4" y="0.9" width="7.2" height="11" rx="1.4" strokeWidth="1.5" /><path d="M2.4 2.6V10.2M13.6 2.6V10.2" strokeWidth="1.3" /><path d="M0.5 4V8.8M15.5 4V8.8" strokeWidth="0.9" /><path d="M6.6 1.3H9.4" strokeWidth="2" /></svg>
      </StatusIcon>
      <StatusIcon $ml={4.2}>
        <svg width="13" height="12" viewBox="0 0 13 12"><rect y="0.2" width="12.6" height="11.4" fill="#fff" /><path d="M5.2 9.4V3L1.8 7.4H6.4M11 4.2C9.4 2.4 7.4 3.8 7.4 6.1C7.4 9 9.8 9.6 11 8.2V6.4H9.4" fill="none" stroke="#111" strokeWidth="1.1" /></svg>
      </StatusIcon>
      <StatusIcon $ml={2}><DataArrows /></StatusIcon>
      <StatusIcon $ml={3.6}><Signal sim="1" color="#fff" /></StatusIcon>
      <StatusIcon $ml={3.8}><Signal sim="2" color="#57a80e" lost /></StatusIcon>
      <StatusIcon $ml={5}><Battery level={8} /></StatusIcon>
      <Clock><Fit w={49.5}>12:03 PM</Fit></Clock>
    </StatusBar>
  );
}
function OtpStatus() {
  return (
    <StatusBar $h={20.7} $bg="#000">
      <StatusIcon $ml={10}>
        <svg width="12" height="12" viewBox="0 0 12 12"><path d="M0.4 0.4H11.4V9.2H3L0.4 11.8Z" fill="#fff" /><path d="M2.4 2.6H9.4M2.4 4.8H9.4M2.4 7H7.4" stroke="#000" strokeWidth="1" /></svg>
      </StatusIcon>
      <StatusIcon $ml={7.8}><CallAlert /></StatusIcon>
      <StatusIcon $ml={49.8}>
        <svg width="14" height="14" viewBox="0 0 14 14" fill="#fff"><path d="M5.6 0.4C3.6 5 7.4 10.6 13.4 9.6C10.6 14.6 3.4 14.4 1 9.6C-0.8 5.8 1.4 1.6 5.6 0.4Z" /></svg>
      </StatusIcon>
      <StatusIcon $ml={4.6}>
        <svg width="15" height="14" viewBox="0 0 15 14" fill="none" stroke="#fff" strokeWidth="1.3"><circle cx="7.5" cy="7.8" r="5.4" /><path d="M0.8 3.6L4 0.9M14.2 3.6L11 0.9M5.4 6H9.4L5.8 9.8H9.8" /></svg>
      </StatusIcon>
      <StatusIcon $ml={4.6}>
        <svg width="17" height="13" viewBox="0 0 17 13" fill="none" stroke="#fff" strokeWidth="1.7"><path d="M0.8 4.6C5 0 12 0 16.2 4.6M3.2 7.4C6 4.4 11 4.4 13.8 7.4M5.8 10C7.4 8.4 9.6 8.4 11.2 10" /><circle cx="8.5" cy="11.8" r="0.6" fill="#fff" /></svg>
      </StatusIcon>
      <StatusIcon $ml={1.2}><DataArrows /></StatusIcon>
      <StatusIcon $ml={4}><Signal sim="1" color="#fff" /></StatusIcon>
      <StatusIcon $ml={4.3}><Signal sim="2" color="#4fae12" /></StatusIcon>
      <Percent><Fit w={21.8}>71%</Fit></Percent>
      <StatusIcon $ml={3.8}><Battery level={9} /></StatusIcon>
      <Clock><Fit w={49.5}>12:45 PM</Fit></Clock>
    </StatusBar>
  );
}

/* ---------- order placed ---------- */

const OrderBody = styled.div`
  flex: 1;
  min-height: 0;
  overflow: hidden;
  padding: 13.3px 13.7px 0;
  text-align: center;
`;
const SuccessBadge = styled.div`
  display: flex;
  align-items: center;
  justify-content: center;
  width: 50px;
  height: 50px;
  margin: 0 auto;
  border-radius: 50%;
  border: 1.3px solid #1c9cad;
  background: ${CYAN};
`;
const Thanks = styled.div`
  margin-top: 17.2px;
  height: 18.5px;
  font-size: 16.7px;
  line-height: 20px;
  font-weight: 500;
  color: #222;
`;
const OrderText = styled.div`
  margin: 15px -10px 0;
  font-size: 12px;
  line-height: 14px;
  color: #111;
  b { font-weight: 700; color: #000; }
`;
const Processing = styled.div`
  margin-top: 15px;
  height: 14px;
  font-size: 12px;
  line-height: 14px;
  color: #444;
`;
const Rule = styled.hr<{ $mt: number; $soft?: boolean }>`
  height: 1.2px;
  margin: ${(p) => p.$mt}px 0 0;
  border: 0;
  background: ${(p) => (p.$soft ? "#dfdfdf" : "#d0d0d0")};
`;
const Reach = styled.div`
  margin-top: 8.6px;
  height: 11.4px;
  font-size: 10px;
  line-height: 12px;
  color: #959595;
`;
const Contacts = styled.div`
  display: grid;
  grid-template-columns: 31px 98.6px 20px 34.5px 1fr;
  align-items: center;
  height: 26.3px;
  margin-top: 7px;
  text-align: left;
  font-size: 10.1px;
  line-height: 12px;
  color: #19bfce;
  & > span { padding-top: 1.2px; }
`;
const ContactDivider = styled.i`
  width: 1px;
  height: 26.3px;
  background: #c9c9c9;
`;
const Legal = styled.p<{ $mt: number }>`
  margin: ${(p) => p.$mt}px -6px 0 0;
  text-align: left;
  font-size: 8.4px;
  line-height: 15px;
  color: #959595;
  & > span { display: block; height: 15px; }
  b { font-weight: 700; color: #19bfce; text-decoration: underline; }
`;
const Toast = styled.div`
  position: absolute;
  left: 17px;
  top: 428.3px;
  width: 266px;
  height: 52px;
  padding: 12.1px 0 0 21px;
  border-radius: 17px;
  background: rgba(85, 85, 85, 0.91);
  color: #fff;
  font-family: "Roboto Condensed", Roboto, sans-serif;
  font-size: 14px;
  line-height: 15.8px;
  text-shadow: 0.7px 0.9px 1px rgba(0, 0, 0, 0.6);
  & > span { display: block; }
`;
const OrderActions = styled.footer`
  flex: none;
  display: grid;
  grid-template-columns: 1fr 1fr;
  height: 40.5px;
  border-top: 1px solid #e1e1e1;
  background: #fff;
  font-size: 11.7px;
  line-height: 39.4px;
  font-weight: 500;
  text-align: center;
`;
const TrackOrder = styled.span`
  color: #14bccb;
`;
const HomeButton = styled.span`
  border-radius: 1.5px;
  background: ${CYAN};
  color: #fff;
`;

function OrderScreen({ mt = 0 }: { mt?: number }) {
  return (
    <Phone $h={534} $mt={mt}>
      <OrderStatus />
      <TopBar title="Order Placed" w={96} lift={1.4} bold />
      <OrderBody>
        <SuccessBadge>
          <svg width="24" height="18" viewBox="0 0 24 18" fill="none" stroke="#fff" strokeWidth="1.3">
            <path d="M1.4 10.6L7.2 16.2L23 1.4" />
          </svg>
        </SuccessBadge>
        <Thanks><Fit w={90.7}>THANK YOU</Fit></Thanks>
        <OrderText>
          <Fit w={263.7}>Order <b>#PO26017235476777</b> has been successfully</Fit><br />
          <Fit w={34.7}>placed</Fit>
        </OrderText>
        <Processing><Fit w={200.5}>Your order is currently being processed</Fit></Processing>
        <Rule $mt={13.4} $soft />
        <Reach><Fit w={54.3}>Reach us at:</Fit></Reach>
        <Contacts>
          <svg width="17" height="17" viewBox="0 0 17 17" fill="none" stroke="#36c0cb" strokeWidth="1">
            <path d="M3.4 0.8L0.9 2.6C0.4 4.4 1.4 7.4 5.4 11.6C9.6 15.8 12.2 16.6 14 16.2L16.2 13.8L12.4 10.6L10.4 11.8C8.8 11 6.4 8.6 5.4 6.8L6.6 4.8Z" strokeLinejoin="round" />
            <path d="M9.2 0.8C13.6 1.2 15.8 3.6 16.4 7.6M9 3.4C11.8 3.6 13.6 5.2 13.8 8M9 5.8C10.4 6 11.2 6.8 11.4 8.2" />
          </svg>
          <Fit w={66}>0124–4166666</Fit>
          <ContactDivider />
          <svg width="21" height="15" viewBox="0 0 21 15" fill="none" stroke="#36c0cb" strokeWidth="1.1">
            <rect x="0.6" y="0.6" width="19.6" height="13.8" rx="0.8" />
            <path d="M2 1L8.8 7.8C9.8 8.6 11 8.6 12 7.8L18.8 1" />
          </svg>
          <Fit w={70.7}>care@1mg.com</Fit>
        </Contacts>
        <Rule $mt={20} />
        <Legal $mt={29.7}>
          <Fit w={243}>1mg is a technology platform to facilitate transaction of business.</Fit>
          <Fit w={258.5}>The products and services are offered for sale by the sellers. The user</Fit>
          <Fit w={246.7}>authorizes the delivery personnel to be his agent for delivery of the</Fit>
          <Fit w={169}>goods. For details read <b>Terms and Conditions</b>.</Fit>
        </Legal>
        <Legal $mt={15}>
          <Fit w={254.3}>*Value may change if the total order value changes. 1mgCash will be</Fit>
          <Fit w={270.5}>credited 7 days after your complete order is delivered in case of Products</Fit>
          <Fit w={255}>and in case of Lab Services. 1mgCash will be credited within 24 hours</Fit>
          <Fit w={265.7}>from the time of generation of test report. 1mgCash will not be credited</Fit>
        </Legal>
      </OrderBody>
      <Toast>
        <Fit w={206} squeeze>Attached prescriptions will be uploaded</Fit>
        <Fit w={165} squeeze>automatically in the background</Fit>
      </Toast>
      <OrderActions>
        <TrackOrder><Fit w={76}>TRACK ORDER</Fit></TrackOrder>
        <HomeButton><Fit w={33.5}>HOME</Fit></HomeButton>
      </OrderActions>
    </Phone>
  );
}

/* ---------- bank verification ---------- */

const BankPage = styled.div`
  height: 368px;
  margin: 0 1px;
  padding: 13.6px 12.3px 0 13.7px;
  border: 1px solid #e6e6e6;
  border-top: 0;
  border-bottom: 1.5px solid #ececec;
`;
const Brands = styled.div`
  display: flex;
  justify-content: space-between;
  height: 55.7px;
`;
const VisaMark = styled.div`
  padding: 2.9px 0 0 1.6px;
  font-family: "Open Sans", "Noto Sans", sans-serif;
  color: #1420a0;
  font-weight: 700;
`;
const VerifiedBy = styled.div`
  height: 26px;
  font-size: 20.5px;
  line-height: 26px;
  font-style: italic;
  white-space: nowrap;
  small { margin-left: 3px; font-size: 17px; font-weight: 700; }
`;
const VisaWord = styled.div`
  position: relative;
  width: 55px;
  height: 20px;
  margin: -3px 0 0 20.4px;
  font-size: 23.4px;
  line-height: 20px;
  font-weight: 800;
  svg { position: absolute; left: -0.8px; top: 2.4px; }
`;
const Kotak = styled.div`
  display: flex;
  width: 90.7px;
  height: 33.7px;
  padding: 4.8px 0 0 2.4px;
  background: #dc231c;
  color: #fff;
`;
const KotakText = styled.div`
  margin-left: 2px;
`;
const KotakName = styled.div`
  height: 16px;
  margin-top: 2.6px;
  font: 700 16.6px/16px "Open Sans", "Noto Sans", sans-serif;
  sup { font-size: 5px; vertical-align: 7px; line-height: 0; }
`;
const KotakSub = styled.div`
  margin-top: -1.5px;
  font-size: 7.2px;
  line-height: 8px;
`;
const Intro = styled.p`
  height: 47.6px;
  margin: 0;
  font-size: 8.5px;
  line-height: 15.8px;
  color: #222;
  sup { font-size: 6px; line-height: 0; vertical-align: 3.4px; }
  & > span { display: block; height: 15.8px; }
`;
const FactRow = styled.div<{ $tone: string; $value?: string }>`
  display: grid;
  grid-template-columns: 86px 1fr;
  column-gap: 8.6px;
  align-items: baseline;
  height: 17.6px;
  line-height: 14px;
  color: ${(p) => p.$tone};
  font-weight: 700;
  & > :first-child { justify-self: end; font-size: 7.1px; font-weight: 600; }
  & > :last-child { font-size: 10.3px; color: ${(p) => p.$value || p.$tone}; }
`;
const OtpRow = styled.div`
  display: grid;
  grid-template-columns: 86px 76.4px;
  column-gap: 8.6px;
  height: 20px;
  margin-top: 14.6px;
  font-size: 7.1px;
  font-weight: 700;
  line-height: 17px;
  color: #00007d;
  & > :first-child { justify-self: end; }
`;
const OtpBox = styled.i`
  border: 1px solid #cfcfcf;
`;
const Trouble = styled.div`
  margin: 0 0 0 15px;
  height: 12px;
  font-size: 8.5px;
  line-height: 12.4px;
  color: #8b8b8b;
  b { font-weight: 400; color: #3a86bd; }
`;
const GreyButtons = styled.div`
  display: flex;
  gap: 24.6px;
  margin: 18.8px 0 0 74px;
`;
const GreyButton = styled.div<{ $w: number }>`
  width: ${(p) => p.$w}px;
  height: 20.7px;
  border: 1.4px solid;
  border-color: #c8ccce #9a948c #9a948c #c8ccce;
  background: #708090;
  text-align: center;
  font-size: 10.2px;
  line-height: 18px;
  font-weight: 700;
  color: #f6ecd6;
`;
const Timeout = styled.div`
  margin-top: 17.7px;
  height: 12px;
  padding-left: 0.6px;
  text-align: center;
  font-size: 8.5px;
  line-height: 12px;
  color: #1d1d80;
`;
const Powered = styled.div`
  height: 12px;
  margin-top: 0.5px;
  font-size: 8.5px;
  line-height: 12.4px;
  color: #222;
`;
const Wibmo = styled.div`
  display: flex;
  align-items: center;
  gap: 1.8px;
  height: 18px;
  margin: 2.5px 0 0 2.2px;
  font: 600 9.6px/14px "Lato", "Open Sans", sans-serif;
  color: #2c90e0;
`;
const Code = styled.div`
  margin-top: 33.2px;
  height: 30px;
  text-align: center;
  font-size: 24.6px;
  line-height: 30px;
  color: #2b87dd;
`;
const CodeHint = styled.div`
  margin-top: 5.4px;
  height: 12px;
  text-align: center;
  font-size: 10.3px;
  line-height: 12px;
  color: #999;
`;
const Approve = styled.div`
  width: 121.6px;
  height: 33.8px;
  margin: 6.8px auto 0;
  border-radius: 5px;
  background: #2787df;
  box-shadow: inset 0 0 0 1px #1c7ad0, 0 1px 1.5px rgba(0, 0, 0, 0.35);
  text-align: center;
  font-size: 10.6px;
  line-height: 34.6px;
  font-weight: 700;
  color: #fff;
`;

function VerifyScreen() {
  return (
    <Phone $h={534} $raised>
      <OtpStatus />
      <BankPage>
        <Brands>
          <VisaMark>
            <VerifiedBy><Fit w={67.3} squeeze>Verified</Fit><small><Fit w={17} squeeze>by</Fit></small></VerifiedBy>
            <VisaWord>
              <Fit w={55} squeeze>VISA</Fit>
              <svg width="11" height="13" viewBox="0 0 11 13"><path d="M0 0.2H5.6C7.4 0.2 8.4 1 8.8 3.2L10 9.6C8 5.4 5 2 0 0.2Z" fill="#f7a823" /></svg>
            </VisaWord>
          </VisaMark>
          <Kotak>
            <svg width="24.6" height="24.6" viewBox="0 0 25 25">
              <circle cx="12.5" cy="12.5" r="12.3" fill="#12305f" />
              <path d="M12.5 12.5C10 7.6 4 7.6 4 12.5C4 17.4 10 17.4 12.5 12.5C15 7.6 21 7.6 21 12.5C21 17.4 15 17.4 12.5 12.5M15.4 5.6C12 4.6 10 7.4 12.5 12.5C15 17.6 13 20.4 9.6 19.4" fill="none" stroke="#fff" strokeWidth="1.9" />
            </svg>
            <KotakText>
              <KotakName><Fit w={40.5} squeeze>kotak<sup>®</sup></Fit></KotakName>
              <KotakSub><Fit w={59.5} squeeze>Kotak Mahindra Bank</Fit></KotakSub>
            </KotakText>
          </Kotak>
        </Brands>
        <Intro>
          <Fit w={270.5}>Please enter your Verified by Visa<sup>®</sup> password in the field below to confirm</Fit>
          <Fit w={270.7}>your  identity  for  this  purchase,  This  information  is  not  shared  with  the</Fit>
          <Fit w={37}>merchant.</Fit>
        </Intro>
        <FactRow $tone="#7f7f10"><Fit w={50}>Merchant Name:</Fit><Fit w={22}>1mg</Fit></FactRow>
        <FactRow $tone="#7f7f10"><Fit w={15.8}>Date:</Fit><Fit w={64.5}>Feb 22, 2018</Fit></FactRow>
        <FactRow $tone="#00007d"><Fit w={40}>Total Charge:</Fit><Fit w={50.5}>Rs 231.80</Fit></FactRow>
        <FactRow $tone="#00007d"><Fit w={42}>Card Number:</Fit><Fit w={118.3}>XXXX XXXX XXXX 1900</Fit></FactRow>
        <FactRow $tone="#00007d" $value="#f20505"><Fit w={57.5}>Personal Message:</Fit><Fit w={125}>Let's make money simple</Fit></FactRow>
        <OtpRow><Fit w={81}>One Time Password (OTP):</Fit><OtpBox /></OtpRow>
        <Trouble><Fit w={237}>If you have trouble receiving OTP SMS, <b>Click Here</b> to receive OTP</Fit></Trouble>
        <GreyButtons>
          <GreyButton $w={49}><Fit w={35.7}>Submit</Fit></GreyButton>
          <GreyButton $w={47.3}><Fit w={34.3}>Cancel</Fit></GreyButton>
        </GreyButtons>
        <Timeout><Fit w={204}>This page will automatically timeout after 300 seconds.</Fit></Timeout>
        <Powered><Fit w={43.3}>Powered by</Fit></Powered>
        <Wibmo>
          <svg width="18" height="18" viewBox="0 0 18 18">
            <path d="M2.3 5H7L9.2 9L7 13H2.3L0 9Z" fill="#2f8ffb" />
            <path d="M10.4 0.4H15.1L17.3 4.5L15.1 8.6H10.4L8 4.5Z" fill="#fb9a32" />
            <path d="M10.4 9.2H15.1L17.3 13.3L15.1 17.4H10.4L8 13.3Z" fill="#93c92f" />
          </svg>
          <Fit w={30} squeeze>wibmo</Fit>
        </Wibmo>
      </BankPage>
      <Code><Fit w={81}>522785</Fit></Code>
      <CodeHint><Fit w={64.3}>OTP received</Fit></CodeHint>
      <Approve><Fit w={49}>APPROVE</Fit></Approve>
    </Phone>
  );
}

/* ---------- verdict ---------- */

const Verdict = styled.div`
  display: flex;
  align-items: center;
  gap: 26.5px;
  height: 108px;
  margin: 202px 0 0 92px;
  font: 400 37.4px/60px "Noto Sans", "Open Sans", sans-serif;
  color: #5cb800;
`;
const VerdictText = styled.span`
  margin-top: -3.4px;
`;

export default function App() {
  return (
    <Page>
      <GlobalStyle />
      <Section $h={776}>
        <Heading>
          <Fit w={810} squeeze>Not linked wallet (3 step process of payment and</Fit>
          <Loud $ml={7.5}><Fit w={317} squeeze>many clicks</Fit></Loud>
          <Fit w={12} squeeze>)</Fit>
        </Heading>
        <Flow $mt={38}>
          <WalletsScreen />
          <Arrow w={92} inset={20} y={246.7} />
          <LinkWalletScreen />
          <Arrow w={92} inset={32} y={246.7} />
          <OtpScreen />
          <Arrow w={94} inset={22} y={241} />
          <OrderScreen mt={4} />
        </Flow>
      </Section>

      <Section $h={750}>
        <Heading>
          <Fit w={749} squeeze>Linked wallet (1 step process of payment and</Fit>
          <Loud $ml={10}><Fit w={169} squeeze>1 click</Fit></Loud>
          <Fit w={11} squeeze>)</Fit>
        </Heading>
        <Flow $mt={30}>
          <SavedScreen
            mt={0.4}
            tone="#3cb54a"
            note={[["Get Rs.75 additional", 74.7], ["Cashback in your", 63.3], ["Paytm Wallet", 49]]}
            balance="₹ 445"
          >
            <Footer label="PAY NOW" w={52} pr={4} />
          </SavedScreen>
          <Arrow w={92} inset={20} y={309} />
          <OrderScreen />
          <Verdict>
            <svg width="108" height="108" viewBox="0 0 108 108">
              <circle cx="54" cy="54" r="54" fill="#6ed600" />
              <path d="M22.7 55.3L41.3 74.3L85.3 30.9" fill="none" stroke="#fff" strokeWidth="7.6" />
            </svg>
            <VerdictText><Fit w={133} squeeze>Efficient</Fit></VerdictText>
          </Verdict>
        </Flow>
      </Section>

      <Section $h={760}>
        <Heading><Fit w={394} squeeze>Wallet with low balance</Fit></Heading>
        <Flow $mt={30}>
          <SavedScreen
            mt={6}
            tone="#dc2440"
            note={[["Low balance. You", 65], ["need Rs. 191 more", 69], ["into your account.", 66]]}
            balance="₹ 115"
          >
            <Footer label="ADD MONEY & PAY" w={102} pr={3} arrow />
          </SavedScreen>
          <Arrow w={92} inset={20} y={337} />
          <AddFundsScreen />
          <Arrow w={76} inset={12} y={337} />
          <CvvScreen />
          <Arrow w={92} inset={16} y={337} />
          <VerifyScreen />
          <Arrow w={76} inset={18} y={337} />
          <OrderScreen />
        </Flow>
      </Section>
    </Page>
  );
}
